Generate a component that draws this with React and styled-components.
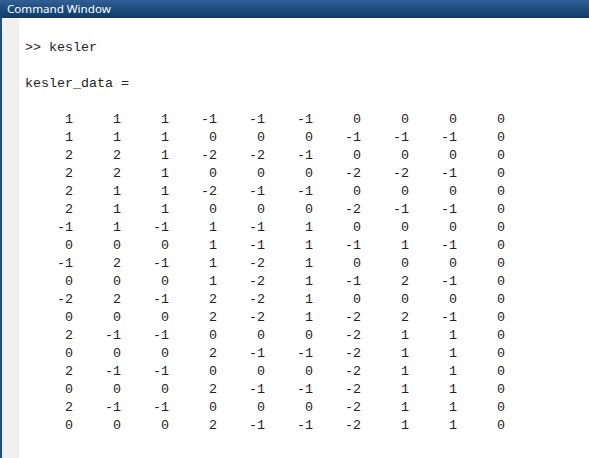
import React from "react";
import styled, { createGlobalStyle } from "styled-components";

const Global = createGlobalStyle`
  html, body { margin: 0; padding: 0; background: #ffffff; }
  #root { width: 589px; height: 458px; }
`;

const Window = styled.div`
  width: 589px;
  height: 458px;
  display: flex;
  flex-direction: column;
  overflow: hidden;
  background: #ffffff;
`;

const TitleBar = styled.div`
  height: 18px;
  flex: none;
  display: flex;
  align-items: center;
  padding-left: 7px;
  background: linear-gradient(to bottom, #2f5f95 0%, #1f4c80 50%, #0f3b69 100%);
  color: #ffffff;
  font-family: "Noto Sans", "Open Sans", sans-serif;
  font-size: 11.6px;
  line-height: 18px;
`;

const Body = styled.div`
  flex: 1;
  display: flex;
`;

const Gutter = styled.div`
  width: 17px;
  flex: none;
  background: #f0f0f0;
  border-left: 2px solid #1d4f86;
`;

const Console = styled.div`
  flex: 1;
  padding: 21px 0 0 6px;
  font-family: "Liberation Mono", "Courier New", monospace;
  font-size: 13.33px;
  line-height: 18px;
  color: #222222;
  white-space: pre;
`;

const Line = styled.div`
  height: 18px;
`;

const data = [
  [1, 1, 1, -1, -1, -1, 0, 0, 0, 0],
  [1, 1, 1, 0, 0, 0, -1, -1, -1, 0],
  [2, 2, 1, -2, -2, -1, 0, 0, 0, 0],
  [2, 2, 1, 0, 0, 0, -2, -2, -1, 0],
  [2, 1, 1, -2, -1, -1, 0, 0, 0, 0],
  [2, 1, 1, 0, 0, 0, -2, -1, -1, 0],
  [-1, 1, -1, 1, -1, 1, 0, 0, 0, 0],
  [0, 0, 0, 1, -1, 1, -1, 1, -1, 0],
  [-1, 2, -1, 1, -2, 1, 0, 0, 0, 0],
  [0, 0, 0, 1, -2, 1, -1, 2, -1, 0],
  [-2, 2, -1, 2, -2, 1, 0, 0, 0, 0],
  [0, 0, 0, 2, -2, 1, -2, 2, -1, 0],
  [2, -1, -1, 0, 0, 0, -2, 1, 1, 0],
  [0, 0, 0, 2, -1, -1, -2, 1, 1, 0],
  [2, -1, -1, 0, 0, 0, -2, 1, 1, 0],
  [0, 0, 0, 2, -1, -1, -2, 1, 1, 0],
  [2, -1, -1, 0, 0, 0, -2, 1, 1, 0],
  [0, 0, 0, 2, -1, -1, -2, 1, 1, 0],
];

export default function App() {
  return (
    <>
      <Global />
      <Window>
        <TitleBar>Command Window</TitleBar>
        <Body>
          <Gutter />
          <Console>
            <Line>{">> kesler"}</Line>
            <Line />
            <Line>{"kesler_data ="}</Line>
            <Line />
            {data.map((row, i) => (
              <Line key={i}>{row.map((v) => String(v).padStart(6, " ")).join("")}</Line>
            ))}
          </Console>
        </Body>
      </Window>
    </>
  );
}
